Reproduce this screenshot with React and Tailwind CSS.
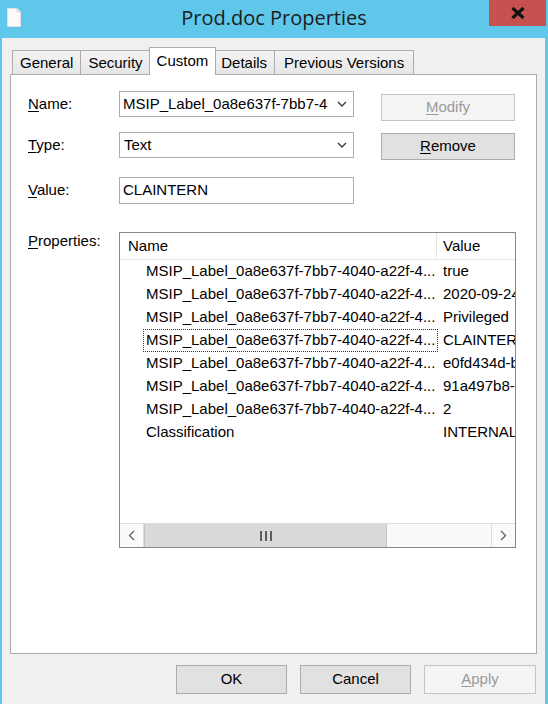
import React from "react";

const NAME = "MSIP_Label_0a8e637f-7bb7-4040-a22f-4...";

const rows = [
  { name: NAME, value: "true" },
  { name: NAME, value: "2020-09-24T08:15:32Z" },
  { name: NAME, value: "Privileged" },
  { name: NAME, value: "CLAINTERN", focused: true },
  { name: NAME, value: "e0fd434d-ba64-497b-90d2-859c472e1a92" },
  { name: NAME, value: "91a497b8-0a3c-4c1a-9d3e-2b0c5a6f7e11" },
  { name: NAME, value: "2" },
  { name: "Classification", value: "INTERNAL" },
];

const tabs = ["General", "Security", "Custom", "Details", "Previous Versions"];

function Chevron() {
  return (
    <svg width="10" height="6" viewBox="0 0 10 6" className="shrink-0">
      <path d="M1 1 L5 5 L9 1" fill="none" stroke="#3c3c3c" strokeWidth="1.4" />
    </svg>
  );
}

function U({ children }) {
  return <span className="underline underline-offset-2">{children}</span>;
}

function Tab({ label, selected }) {
  if (selected) {
    return (
      <div className="relative z-10 -mx-[2px] -mb-px h-[28px] px-[7px] pt-[4px] bg-white border border-b-0 border-[#acacac] leading-[18px]">
        {label}
      </div>
    );
  }
  return (
    <div className="h-[24px] px-[7px] last:px-[9px] pt-[3px] bg-gradient-to-b from-[#f4f4f4] to-[#e6e6e6] border border-b-0 border-[#acacac] leading-[18px] -ml-px first:ml-0">
      {label}
    </div>
  );
}

function Button({ children, disabled, className = "" }) {
  return (
    <div
      className={
        "flex items-center justify-center border " +
        (disabled
          ? "bg-[#f4f4f4] border-[#c4c4c4] text-[#9a9a9a] "
          : "bg-[#e1e1e1] border-[#adadad] text-black ") +
        className
      }
    >
      {children}
    </div>
  );
}

export default function App() {
  return (
    <div className="w-[548px] h-[704px] bg-[#5ec7ea] flex flex-col overflow-hidden font-['Liberation_Sans',Arial,sans-serif] text-[15px] text-black">
      {/* Title bar */}
      <div className="h-[38px] shrink-0 grid grid-cols-[1fr_auto_1fr] items-start">
        <div className="pl-[7px] pt-[8px]">
          <svg width="14" height="19" viewBox="0 0 14 19">
            <path d="M0.5 0.5 H10 L13.5 4 V18.5 H0.5 Z" fill="#fbfbfb" stroke="#e2e2e2" />
            <path d="M10 0.5 V4 H13.5" fill="#eaeaea" stroke="#d8d8d8" />
          </svg>
        </div>
        <div className="pt-[4px] font-['Open_Sans','Noto_Sans',sans-serif] text-[20px] leading-[28px] text-[#1c1c1c]">
          Prod.doc Properties
        </div>
        <div className="flex justify-end pr-[2px]">
          <div className="w-[57px] h-[26px] bg-[#c75050] flex items-center justify-center">
            <svg width="14" height="12" viewBox="0 0 14 12">
              <path d="M1.5 1 L12.5 11 M12.5 1 L1.5 11" stroke="#111" strokeWidth="3.2" />
            </svg>
          </div>
        </div>
      </div>

      {/* Dialog body */}
      <div className="flex-1 ml-[2px] mr-[3px] bg-[#f0f0f0] flex flex-col px-[8px] pt-[9px]">
        {/* Tab strip */}
        <div className="h-[27px] flex items-end pl-[2px]">
          {tabs.map((t) => (
            <Tab key={t} label={t} selected={t === "Custom"} />
          ))}
        </div>

        {/* Tab page */}
        <div className="h-[580px] bg-white border border-[#acacac] pl-[17px] pt-[16px] flex flex-col">
          {/* Name */}
          <div className="flex items-start">
            <div className="w-[91px] h-[26px] flex items-center">
              <span><U>N</U>ame:</span>
            </div>
            <div className="w-[235px] h-[26px] border border-[#acacac] bg-white flex items-center pl-[3px] pr-[6px]">
              <div className="flex-1 overflow-hidden whitespace-nowrap">MSIP_Label_0a8e637f-7bb7-4</div>
              <Chevron />
            </div>
            <Button disabled className="ml-[27px] mt-[3px] w-[134px] h-[27px]">
              <span><U>M</U>odify</span>
            </Button>
          </div>

          {/* Type */}
          <div className="flex items-start mt-[11px]">
            <div className="w-[91px] h-[26px] flex items-center">
              <span><U>T</U>ype:</span>
            </div>
            <div className="w-[235px] h-[26px] border border-[#acacac] bg-white flex items-center pl-[4px] pr-[6px]">
              <div className="flex-1">Text</div>
              <Chevron />
            </div>
            <Button className="ml-[27px] mt-[1px] w-[134px] h-[27px]">
              <span><U>R</U>emove</span>
            </Button>
          </div>

          {/* Value */}
          <div className="flex items-start mt-[17px]">
            <div className="w-[91px] h-[27px] flex items-center">
              <span><U>V</U>alue:</span>
            </div>
            <div className="w-[235px] h-[27px] border border-[#acacac] bg-white flex items-center pl-[3px]">
              CLAINTERN
            </div>
          </div>

          {/* Properties list */}
          <div className="flex items-start mt-[28px]">
            <div className="w-[91px] leading-[18px]">
              <U>P</U>roperties:
            </div>
            <div className="w-[397px] h-[316px] border border-[#828790] bg-white flex flex-col overflow-hidden">
              <div className="h-[27px] shrink-0 flex border-b border-[#e5e5e5]">
                <div className="w-[317px] shrink-0 border-r border-[#e5e5e5] pl-[8px] pt-[1px] flex items-center">Name</div>
                <div className="pl-[6px] pt-[1px] flex items-center">Value</div>
              </div>
              {rows.map((r, i) => (
                <div key={i} className="h-[23px] shrink-0 flex whitespace-nowrap">
                  <div className="w-[317px] shrink-0 pl-[23px] pr-[1px] flex">
                    <div
                      className={
                        "flex-1 flex items-center px-[2px] border " +
                        (r.focused ? "border-dotted border-[#333]" : "border-transparent")
                      }
                    >
                      {r.name}
                    </div>
                  </div>
                  <div className="pl-[6px] flex items-center">{r.value}</div>
                </div>
              ))}
              <div className="flex-1" />
              {/* Horizontal scroll bar */}
              <div className="h-[24px] shrink-0 flex bg-[#fafafa] border-t border-[#dcdcdc]">
                <div className="w-[24px] flex items-center justify-center border-r border-[#dcdcdc]">
                  <svg width="7" height="11" viewBox="0 0 7 11">
                    <path d="M6 1 L1.5 5.5 L6 10" fill="none" stroke="#606060" strokeWidth="1.3" />
                  </svg>
                </div>
                <div className="w-[243px] bg-[#dadada] border-x border-[#c3c3c3] flex items-center justify-center gap-[3px]">
                  <div className="w-[2px] h-[10px] bg-[#606060]" />
                  <div className="w-[2px] h-[10px] bg-[#606060]" />
                  <div className="w-[2px] h-[10px] bg-[#606060]" />
                </div>
                <div className="flex-1" />
                <div className="w-[24px] flex items-center justify-center border-l border-[#dcdcdc]">
                  <svg width="7" height="11" viewBox="0 0 7 11">
                    <path d="M1 1 L5.5 5.5 L1 10" fill="none" stroke="#606060" strokeWidth="1.3" />
                  </svg>
                </div>
              </div>
            </div>
          </div>
        </div>

        {/* Dialog buttons */}
        <div className="mt-[11px] flex justify-end gap-[13px] pr-[1px]">
          <Button className="w-[111px] h-[29px]">OK</Button>
          <Button className="w-[111px] h-[29px]">Cancel</Button>
          <Button disabled className="w-[112px] h-[29px]">
            <span><U>A</U>pply</span>
          </Button>
        </div>
      </div>
    </div>
  );
}
